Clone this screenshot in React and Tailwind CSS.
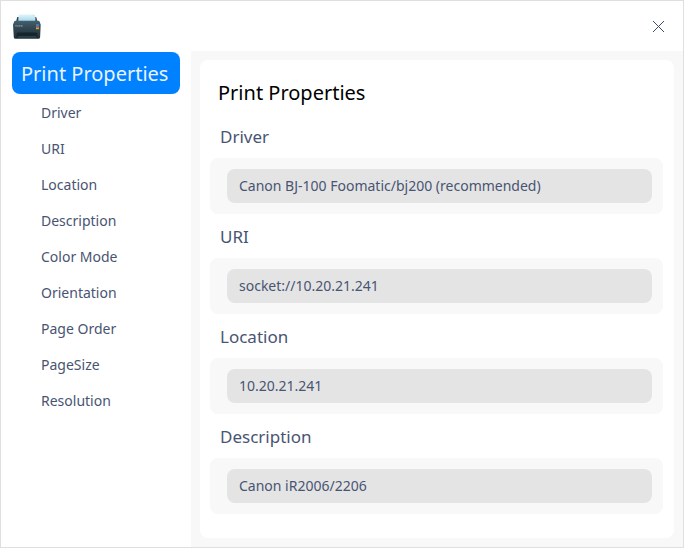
const FIELDS = [
  { label: 'Driver', value: 'Canon BJ-100 Foomatic/bj200 (recommended)' },
  { label: 'URI', value: 'socket://10.20.21.241' },
  { label: 'Location', value: '10.20.21.241' },
  { label: 'Description', value: 'Canon iR2006/2206' },
];

const NAV = [
  'Driver',
  'URI',
  'Location',
  'Description',
  'Color Mode',
  'Orientation',
  'Page Order',
  'PageSize',
  'Resolution',
];

function PrinterIcon() {
  return (
    <svg width="30" height="27" viewBox="0 0 30 27" aria-hidden="true">
      <defs>
        <linearGradient id="paper" x1="0" y1="0" x2="0" y2="1">
          <stop offset="0" stopColor="#e6f6fd" />
          <stop offset="1" stopColor="#a5d6e8" />
        </linearGradient>
        <linearGradient id="body" x1="0" y1="0" x2="0" y2="1">
          <stop offset="0" stopColor="#456070" />
          <stop offset="0.45" stopColor="#30454f" />
          <stop offset="1" stopColor="#1f3039" />
        </linearGradient>
      </defs>
      <path d="M5.2 4h19l1.4 5H4z" fill="#2f4653" />
      <path d="M6.6 1.6 20.8 1.2 23.4 3v5.2H6.3z" fill="url(#paper)" />
      <path d="M20.8 1.2 23.4 3l-2.6.3z" fill="#c6e3ee" />
      <path d="M3.6 7.8h22.6q1.2 0 1.6 1.2l.9 2.8-.6 12.4q-.1 1.6-1.7 1.6H3.5q-1.6 0-1.7-1.6L1 11.8l1-2.8q.4-1.2 1.6-1.2z" fill="url(#body)" />
      <path d="M6 19.4h18q1 0 1.2 1l.6 4.4H4.2l.6-4.4q.2-1 1.2-1z" fill="#16242b" />
      <path d="M6 23h18l.8 1.8H5.2z" fill="#2b404a" />
      <path d="M3.3 12.8h1.4M5.2 13h1.4M7 12.9h1.2M8.6 13h2" stroke="#a5b4bb" strokeWidth=".9" />
      <rect x="24" y="11.2" width="2.9" height="1.7" fill="#3590c0" />
      <rect x="24" y="12.9" width="2.9" height="1.6" fill="#c04c67" />
      <rect x="24" y="14.5" width="2.9" height="1.7" fill="#d8aa36" />
    </svg>
  );
}

export default function App() {
  return (
    <div className="flex h-[548px] w-[684px] flex-col overflow-hidden border border-[#dfdfdf] bg-white font-['Noto_Sans',sans-serif] text-[#485472]">
      <header className="flex h-[50px] shrink-0 items-center justify-between pt-px pr-[19px] pl-[11px]">
        <PrinterIcon />
        <button aria-label="Close" className="block">
          <svg width="11" height="11" viewBox="0 0 11 11" shapeRendering="crispEdges">
            <path d="M0 0 11 11M11 0 0 11" stroke="#414d68" strokeWidth="1" />
          </svg>
        </button>
      </header>
      <div className="flex min-h-0 flex-1">
        <nav className="w-[190px] shrink-0 pt-px pl-[11px]">
          <div className="flex h-[42px] w-[168px] items-center rounded-lg bg-[#0081ff] pt-0.5 pl-[9px] text-xl whitespace-nowrap text-[#eaf3ff]">
            Print Properties
          </div>
          <ul className="pt-px pl-[29px] text-sm">
            {NAV.map((item) => (
              <li key={item} className="flex h-9 items-center">
                {item}
              </li>
            ))}
          </ul>
        </nav>
        <main className="flex-1 bg-[#f8f8f8] p-[9px]">
          <div className="h-full rounded-lg bg-white pr-[11px] pl-2.5">
            <h1 className="flex h-[54px] items-center pt-3 pl-2 text-xl text-black">Print Properties</h1>
            {FIELDS.map((field) => (
              <section key={field.label}>
                <h2 className="flex h-11 items-center pt-0.5 pl-2.5 text-[17px]">{field.label}</h2>
                <div className="h-14 rounded-lg bg-[#f8f8f8] py-[11px] pr-[11px] pl-[17px]">
                  <div className="flex h-[34px] items-center rounded-lg bg-[#e4e4e4] pl-3 text-sm">{field.value}</div>
                </div>
              </section>
            ))}
          </div>
        </main>
      </div>
    </div>
  );
}
